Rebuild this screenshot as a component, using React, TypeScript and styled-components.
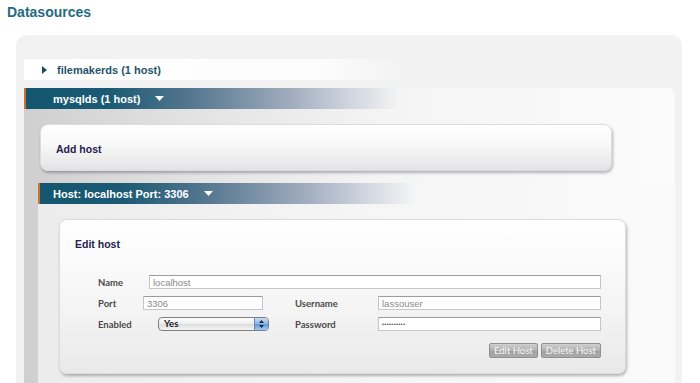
import styled, { createGlobalStyle } from "styled-components";

const GlobalStyle = createGlobalStyle`
  html, body {
    margin: 0;
    padding: 0;
    background: #fff;
  }
  body {
    font-family: "Liberation Sans", Arial, sans-serif;
    overflow: hidden;
  }
`;

function RightArrow() {
  return (
    <svg width="5" height="8" viewBox="0 0 5 8">
      <path d="M0 0L5 4L0 8Z" fill="#1e4d60" />
    </svg>
  );
}

function DownArrow() {
  return (
    <svg width="9" height="5" viewBox="0 0 9 5">
      <path d="M0 0H9L4.5 5Z" fill="#fff" />
    </svg>
  );
}

function StepperArrows() {
  return (
    <svg width="5" height="8" viewBox="0 0 5 8">
      <path d="M0 3L2.5 0L5 3Z" fill="#1c2c44" />
      <path d="M0 5L2.5 8L5 5Z" fill="#1c2c44" />
    </svg>
  );
}

export default function App() {
  return (
    <>
      <GlobalStyle />
      <Title>Datasources</Title>
      <Panel>
        <CollapsedBar>
          <RightArrow />
          <span>filemakerds (1 host)</span>
        </CollapsedBar>

        <Section $tone="outer">
          <SectionBar $indent={27} $width={376}>
            <span>mysqlds (1 host)</span>
            <DownArrow />
          </SectionBar>
          <SectionBody $inset={14}>
            <AddCard>
              <CardTitle>Add host</CardTitle>
            </AddCard>

            <Section $tone="inner">
              <SectionBar $indent={13} $width={378}>
                <span>Host: localhost Port: 3306</span>
                <DownArrow />
              </SectionBar>
              <SectionBody $inset={21}>
                <EditCard>
                  <CardTitle>Edit host</CardTitle>
                  <Form>
                    <Row>
                      <Label $w={51}>Name</Label>
                      <Field readOnly value="localhost" />
                    </Row>
                    <Row>
                      <Label $w={45}>Port</Label>
                      <Field readOnly value="3306" $w={120} />
                      <Label $w={83} $gap={32}>
                        Username
                      </Label>
                      <Field readOnly value="lassouser" />
                    </Row>
                    <Row>
                      <Label $w={60}>Enabled</Label>
                      <SelectBox>
                        <SelectValue>Yes</SelectValue>
                        <Stepper>
                          <StepperArrows />
                        </Stepper>
                      </SelectBox>
                      <Label $w={83} $gap={26}>
                        Password
                      </Label>
                      <Field readOnly type="password" value="lassopass1" $dots />
                    </Row>
                    <Actions>
                      <Button>Edit Host</Button>
                      <Button>Delete Host</Button>
                    </Actions>
                  </Form>
                </EditCard>
              </SectionBody>
            </Section>
          </SectionBody>
        </Section>
      </Panel>
    </>
  );
}

const Title = styled.h1`
  margin: 0;
  padding: 4px 7px 0;
  height: 31px;
  font-size: 14px;
  line-height: 16px;
  font-weight: bold;
  color: #266a82;
`;

const Panel = styled.div`
  margin: 0 18px 0 16px;
  padding: 24px 7px 0 8px;
  min-height: 400px;
  background: #f2f2f2;
  border-radius: 10px 10px 0 0;
`;

const CollapsedBar = styled.div`
  display: flex;
  align-items: center;
  gap: 10px;
  width: 380px;
  height: 21px;
  box-sizing: border-box;
  padding-left: 18px;
  margin-bottom: 8px;
  background: linear-gradient(
    to right,
    #ffffff 0%,
    #fcfcfc 78%,
    rgba(255, 255, 255, 0) 100%
  );
  color: #1f566b;
  font-size: 11px;
  font-weight: bold;
`;

const Section = styled.div<{ $tone: "outer" | "inner" }>`
  border-radius: 0 8px 0 0;
  margin-top: ${(p) => (p.$tone === "inner" ? "12px" : "0")};
  background: ${(p) =>
    p.$tone === "outer"
      ? "linear-gradient(to right, #cfcfcf 0%, #e2e2e2 25%, #f4f4f4 55%, #fbfbfb 100%)"
      : "linear-gradient(to right, #ececec 0%, #f5f5f5 50%, #fafafa 100%)"};
`;

const SectionBar = styled.div<{ $indent: number; $width: number }>`
  display: flex;
  align-items: center;
  gap: 15px;
  width: ${(p) => p.$width}px;
  height: 21px;
  box-sizing: border-box;
  padding-left: ${(p) => p.$indent}px;
  border-left: 2px solid #c8742f;
  background: linear-gradient(
    to right,
    #14566f 0%,
    #1b5a74 22%,
    #577890 45%,
    #9eabbd 70%,
    #cfd4de 86%,
    rgba(255, 255, 255, 0) 100%
  );
  color: #fff;
  font-size: 11px;
  font-weight: bold;
`;

const SectionBody = styled.div<{ $inset: number }>`
  padding: 15px 0 20px ${(p) => p.$inset}px;
`;

const Card = styled.div`
  border: 1px solid #dcdcdc;
  border-radius: 8px;
  box-shadow: 1px 2px 3px rgba(0, 0, 0, 0.28);
`;

const AddCard = styled(Card)`
  margin: 0 63px 0 2px;
  padding: 17px 15px 14px;
  background: linear-gradient(to bottom, #ffffff 0%, #f8f8f8 45%, #e3e3e5 100%);
`;

const EditCard = styled(Card)`
  margin-right: 49px;
  padding: 17px 24px 15px 15px;
  background: linear-gradient(to bottom, #ffffff 0%, #f6f6f6 50%, #e9e9e9 100%);
`;

const CardTitle = styled.div`
  font-size: 10.5px;
  line-height: 14px;
  font-weight: bold;
  color: #1f2350;
`;

const Form = styled.div`
  display: flex;
  flex-direction: column;
  gap: 7px;
  margin: 24px 0 0 23px;
`;

const Row = styled.div`
  display: flex;
  align-items: center;
  height: 14px;
`;

const Label = styled.span<{ $w: number; $gap?: number }>`
  flex: none;
  width: ${(p) => p.$w}px;
  margin-left: ${(p) => p.$gap ?? 0}px;
  font-family: Lato, "Liberation Sans", sans-serif;
  font-size: 9.5px;
  font-weight: bold;
  color: #4a4a4a;
`;

const Field = styled.input<{ $w?: number; $dots?: boolean }>`
  ${(p) => (p.$w ? `width: ${p.$w}px; flex: none;` : "flex: 1; min-width: 0;")}
  height: 14px;
  box-sizing: border-box;
  margin: 0;
  padding: 0 3px;
  border: 1px solid #c6c6c6;
  border-top-color: #9c9c9c;
  border-radius: 0;
  background: #fff;
  outline: none;
  font-family: "Liberation Sans", Arial, sans-serif;
  font-size: ${(p) => (p.$dots ? "5.5px" : "9.5px")};
  letter-spacing: ${(p) => (p.$dots ? "0.4px" : "0")};
  color: ${(p) => (p.$dots ? "#444" : "#8a8a8a")};
`;

const SelectBox = styled.div`
  flex: none;
  display: flex;
  width: 111px;
  height: 14px;
  box-sizing: border-box;
  border: 1px solid #7e7e7e;
  border-radius: 4px;
  overflow: hidden;
  background: linear-gradient(to bottom, #ffffff 0%, #ececec 50%, #dddddd 55%, #f6f6f6 100%);
`;

const SelectValue = styled.span`
  flex: 1;
  padding-left: 5px;
  font-family: Lato, "Liberation Sans", sans-serif;
  font-size: 9.5px;
  font-weight: bold;
  line-height: 12px;
  color: #222;
`;

const Stepper = styled.span`
  display: flex;
  align-items: center;
  justify-content: center;
  width: 13px;
  border-left: 1px solid #6c86a8;
  background: linear-gradient(to bottom, #c8ddf5 0%, #8cb6e6 50%, #5f97da 55%, #a6cbf2 100%);
`;

const Actions = styled.div`
  display: flex;
  justify-content: flex-end;
  gap: 3px;
  margin-top: 5px;
`;

const Button = styled.button`
  height: 15px;
  margin: 0;
  padding: 0 4px;
  border: 1px solid #8f8f8f;
  border-radius: 2px;
  background: linear-gradient(to bottom, #d0d0d0 0%, #b0b0b0 50%, #a0a0a0 52%, #ababab 100%);
  font-family: Lato, "Liberation Sans", sans-serif;
  font-size: 9.5px;
  line-height: 13px;
  color: #f7f7f7;
`;
